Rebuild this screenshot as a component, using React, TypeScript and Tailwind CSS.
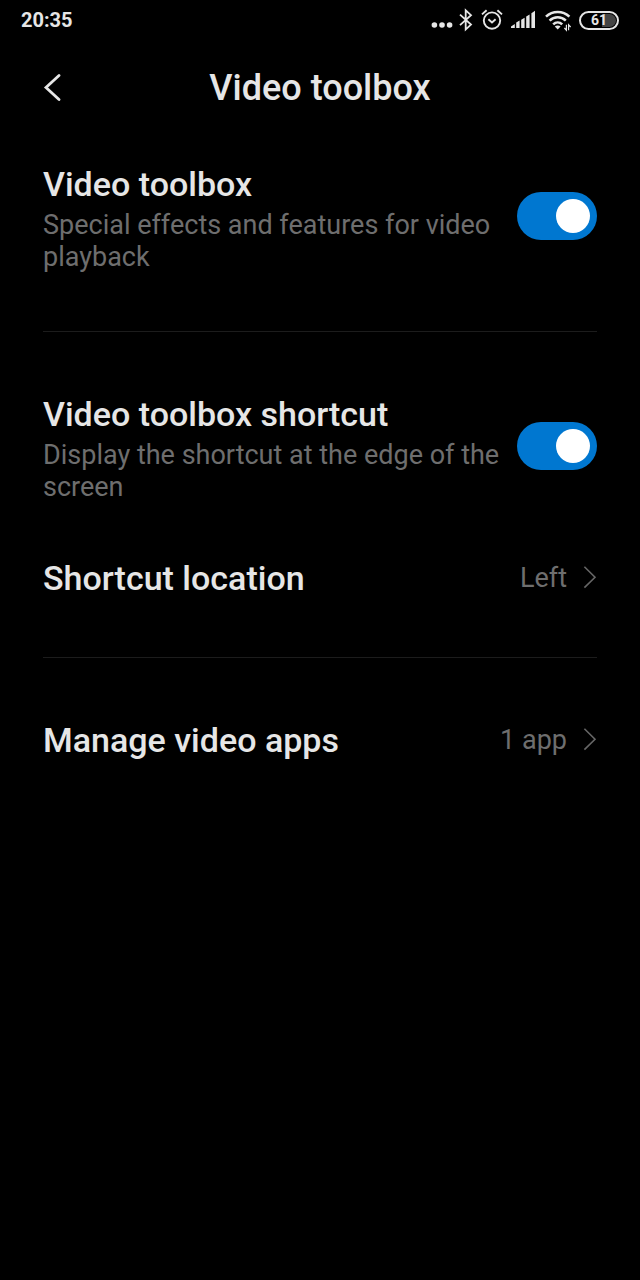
import { useState } from 'react';
import type { ReactNode } from 'react';

const StatusBar = () => (
  <div className="flex h-10 items-center justify-between px-[21px]">
    <span className="text-[20px] font-bold leading-6">20:35</span>
    <div className="flex items-center">
      <svg width="22" height="24" viewBox="0 0 22 24" fill="currentColor" aria-hidden="true">
        <circle cx="3.4" cy="17" r="2.8" />
        <circle cx="11" cy="17" r="2.8" />
        <circle cx="18.6" cy="17" r="2.8" />
      </svg>
      <svg className="ml-1.5" width="14" height="24" viewBox="0 0 14 24" fill="none" stroke="currentColor" strokeWidth="1.8" aria-hidden="true">
        <path d="M1 6.6 12 16.6 6.7 21.4V2.4L12 7.2 1 17.2" />
      </svg>
      <svg className="ml-2" width="22" height="24" viewBox="0 0 22 24" fill="none" stroke="currentColor" strokeWidth="1.9" aria-hidden="true">
        <circle cx="11" cy="12.6" r="8.2" />
        <path d="M7.4 11.2 11 14.4l3.6-3.2" />
        <path d="M1 6.4 5.6 2.2M21 6.4l-4.600-4.200" />
      </svg>
      <svg className="ml-2" width="26" height="24" viewBox="0 0 26 24" fill="currentColor" aria-hidden="true">
        <path d="M0 20v-1.600L3.800 16V20zM5.200 20v-5.400l3.400-2V20zM10.200 20v-8.200l3.400-2V20zM15.200 20V8.600l3.400-2.200V20zM20.400 20V5.200L24 2.800V20z" />
      </svg>
      <svg className="ml-2" width="26" height="24" viewBox="0 0 26 24" fill="none" stroke="currentColor" strokeWidth="2.6" aria-hidden="true">
        <path d="M1 8.600c6.600-6.200 16.800-6.200 23.400 0M4.600 12.600c4.600-4.400 11.600-4.400 16.200 0M8.200 16.400c2.600-2.500 6.400-2.500 9 0" />
        <path d="m12.700 21.600-2.900-3c1.600-1.500 4.200-1.500 5.800 0z" fill="currentColor" stroke="none" />
        <path d="M21.400 16.800v5.400l-2-2.200M23.600 22.200v-5.400l2 2.200" strokeWidth="1.200" />
      </svg>
      <div className="ml-2 flex h-[19px] w-10 rounded-full border-2 border-[#e6e6e6] p-px">
        <span className="flex flex-1 items-center justify-center rounded-full bg-linear-to-r from-black from-60% to-[#444] to-60% text-[14px] font-bold leading-none">
          61
        </span>
      </div>
    </div>
  </div>
);

const Chevron = () => (
  <svg className="ml-4" width="14" height="24" viewBox="0 0 14 24" fill="none" stroke="#666" strokeWidth="1.6" aria-hidden="true">
    <path d="M1.400 .8 12 11.200 1.400 21.600" />
  </svg>
);

type ToggleRowProps = {
  id: string;
  title: string;
  description: string;
};

const ToggleRow = ({ id, title, description }: ToggleRowProps) => {
  const [checked, setChecked] = useState(true);

  return (
    <div className="flex items-center justify-between gap-3">
      <label htmlFor={id} className="flex-1">
        <span className="block text-[34px] font-medium leading-[50px]">{title}</span>
        <span className="block text-[27px] leading-8 text-[#6e6e6e]">{description}</span>
      </label>
      <input
        id={id}
        type="checkbox"
        role="switch"
        checked={checked}
        onChange={(e) => setChecked(e.target.checked)}
        className="flex h-12 w-20 shrink-0 cursor-pointer appearance-none items-center rounded-full bg-[#333] px-[7px] before:size-[34px] before:rounded-full before:bg-white checked:justify-end checked:bg-[#0077d0]"
      />
    </div>
  );
};

const LinkRow = ({ title, value }: { title: string; value: string }) => (
  <button type="button" className="flex w-full items-center justify-between text-left">
    <span className="text-[34px] font-medium leading-[50px]">{title}</span>
    <span className="flex items-center text-[27px] leading-8 text-[#6e6e6e]">
      {value}
      <Chevron />
    </span>
  </button>
);

const Section = ({ children }: { children: ReactNode }) => (
  <section className="flex flex-col gap-[50px] border-b border-[#1c1c1c] pb-[54px] pt-[57px] first:pb-[58px] first:pt-0 last:border-b-0">
    {children}
  </section>
);

const App = () => (
  <div className="min-h-screen bg-black font-['Roboto',sans-serif] text-[#e6e6e6]">
    <StatusBar />

    <header className="grid h-[95px] grid-cols-[1fr_auto_1fr] items-center px-[43px]">
      <button type="button" aria-label="Back" className="justify-self-start">
        <svg width="20" height="28" viewBox="0 0 20 28" fill="none" stroke="currentColor" strokeWidth="2.800" strokeLinecap="round" aria-hidden="true">
          <path d="M16 1.500 3 13.500l13 12" />
        </svg>
      </button>
      <h1 className="text-[36px] font-medium leading-10">Video toolbox</h1>
    </header>

    <main className="px-[43px] pt-6">
      <Section>
        <ToggleRow
          id="video-toolbox"
          title="Video toolbox"
          description="Special effects and features for video playback"
        />
      </Section>
      <Section>
        <ToggleRow
          id="toolbox-shortcut"
          title="Video toolbox shortcut"
          description="Display the shortcut at the edge of the screen"
        />
        <LinkRow title="Shortcut location" value="Left" />
      </Section>
      <Section>
        <LinkRow title="Manage video apps" value="1 app" />
      </Section>
    </main>
  </div>
);

export default App;
